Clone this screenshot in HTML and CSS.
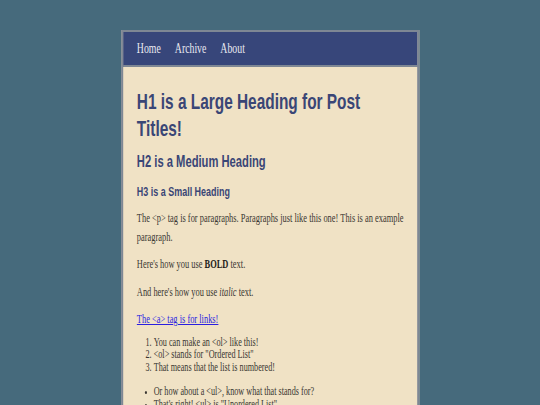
FILE: index.html
```html
<!DOCTYPE html>
<html lang="en">
<head>
<meta charset="utf-8">
<title>Style Guide</title>
<link rel="stylesheet" href="styles.css">
</head>
<body>
<div class="viewport">
  <div class="page">
    <div class="card">
      <nav class="nav">
        <a class="nav-link" href="#">Home</a>
        <a class="nav-link" href="#">Archive</a>
        <a class="nav-link" href="#">About</a>
      </nav>
      <main class="post">
        <h1 class="post-title">H1 is a Large Heading for Post Titles!</h1>
        <h2 class="post-h2">H2 is a Medium Heading</h2>
        <h3 class="post-h3">H3 is a Small Heading</h3>
        <p class="post-p">The &lt;p&gt; tag is for paragraphs. Paragraphs just like this one! This is an example paragraph.</p>
        <p class="post-p">Here's how you use <strong class="strong">BOLD</strong> text.</p>
        <p class="post-p">And here's how you use <em>italic</em> text.</p>
        <p class="post-p"><a class="post-link" href="#">The &lt;a&gt; tag is for links!</a></p>
        <ol class="post-ol">
          <li>You can make an &lt;ol&gt; like this!</li>
          <li>&lt;ol&gt; stands for "Ordered List"</li>
          <li>That means that the list is numbered!</li>
        </ol>
        <ul class="post-ul">
          <li>Or how about a &lt;ul&gt;, know what that stands for?</li>
          <li>That's right! &lt;ul&gt; is "Unordered List"</li>
        </ul>
      </main>
    </div>
  </div>
</div>
</body>
</html>
```

FILE: styles.css
```css
html, body {
  margin: 0;
  padding: 0;
  background: #466a7c;
  overflow: hidden;
}

.viewport {
  width: 540px;
  overflow: hidden;
}

/* the layout is drawn on a wide canvas and squeezed horizontally */
.page {
  width: 771px;
  padding-top: 30px;
  transform: scaleX(0.7);
  transform-origin: 0 0;
  font-family: "Liberation Serif", "Times New Roman", serif;
}

.card {
  width: 426px;
  box-sizing: border-box;
  margin: 0 auto;
  border: 2px solid #7e8794;
  border-left-width: 3px;
  border-right-width: 3px;
  background: #f0e2c5;
}

.nav {
  display: flex;
  gap: 20px;
  padding: 8px 20px;
  background: #37467a;
  border-bottom: 2px solid #7e8794;
}

.nav-link {
  color: #e9e9f1;
  text-decoration: none;
  font-size: 14px;
  line-height: 17px;
}

.post {
  padding: 21px 12px 40px 20px;
  color: #3a3732;
  font-size: 12px;
}

.post-title,
.post-h2,
.post-h3 {
  font-family: "Liberation Sans", Arial, sans-serif;
  font-weight: bold;
  color: #3a4676;
}

.post-title {
  font-size: 22px;
  line-height: 27px;
  margin: 0 0 10px;
}

.post-h2 {
  font-size: 16px;
  line-height: 20px;
  margin: 0 0 12px;
}

.post-h3 {
  font-size: 12.8px;
  line-height: 16px;
  margin: 0 0 9px;
}

.post-p {
  line-height: 19.2px;
  margin: 0 0 8px;
}

.strong {
  color: #1e1c19;
}

.post-link {
  color: #2a1fe0;
}

.post-ol,
.post-ul {
  font-size: 11.7px;
  line-height: 12.4px;
  padding-left: 24px;
}

.post-ol {
  margin: 7px 0 12px;
}

.post-ul {
  margin: 0;
}
```
